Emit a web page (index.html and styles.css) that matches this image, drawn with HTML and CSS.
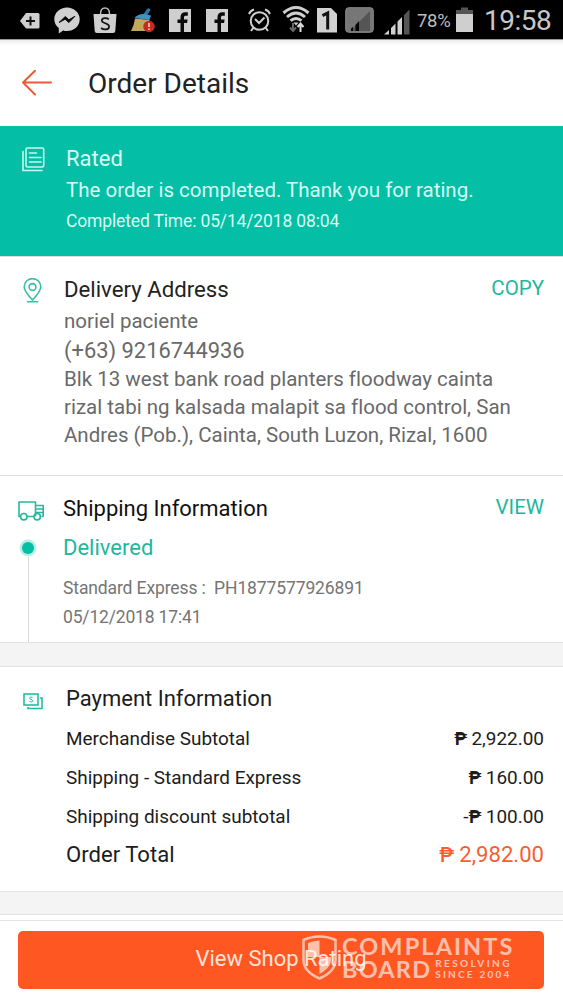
FILE: index.html
```
<!DOCTYPE html>
<html lang="en">
<head>
<meta charset="utf-8">
<title>Order Details</title>
<link rel="stylesheet" href="styles.css">
</head>
<body>
<div class="screen">
  <div class="status">
    <svg class="i-tag" width="20" height="18" viewBox="0 0 20 18"><path d="M6 1h12q1.500 0 1.500 1.500v12.500q0 1.500-1.500 1.500H6L0 9z" fill="#cfcfcf"/><path d="M10.500 4.500v9M6 9h9" stroke="#111" stroke-width="2"/></svg>
    <svg class="i-msg" width="26" height="27" viewBox="0 0 26 27"><path d="M13 .5C6 .5.300 5.600.300 12.300c0 3.700 1.700 6.500 4.500 8.600V26.500l4.300-2.900c1.200.400 2.500.500 3.900.500 7 0 12.700-5.100 12.700-11.800S20 .5 13 .5z" fill="#d0d0d0"/><path d="M5 15.500l6.300-6 3.600 3.300 6-3.500-6 6.300-3.700-3.400z" fill="#0a0a0a" stroke="#0a0a0a"/></svg>
    <svg class="i-bag" width="24" height="27" viewBox="0 0 24 27"><path d="M7.500 7C7.500 3 9.300 1 12 1s4.500 2 4.500 6" fill="none" stroke="#bbb" stroke-width="1.500"/><path d="M.5 7h23l-1.200 17q-.2 2-2.200 2H3.900q-2 0-2.200-2z" fill="#cfcfcf"/><path d="M15.800 12.300c-1.500-1.500-7-2-7 1.200 0 3.200 7.300 2.200 7.300 5.900 0 3.800-5.600 3.600-8 1.600" fill="none" stroke="#111" stroke-width="1.700"/></svg>
    <svg class="i-broom" width="25" height="26" viewBox="0 0 25 26"><path d="M14 7l3.500-5" stroke="#2b78a8" stroke-width="3.500" stroke-linecap="round"/><path d="M3.500 10Q9 3.500 20 7.500L18.500 12z" fill="#3c93c8"/><path d="M4 10.500L18.500 12 17 23H0q3-5 4-12.500z" fill="#c3a75a"/><circle cx="18" cy="18.500" r="5.700" fill="#c62a20"/><path d="M18 15v4M18 20.500v1.500" stroke="#f0d8d0" stroke-width="1.600"/></svg>
    <svg class="i-fb" width="22" height="23" viewBox="0 0 22 23"><path d="M0 0h22v23H0z" fill="#cfcfcf"/><path d="M11.500 23v-9H8.500v-3.500h3V8c0-3.300 2-4.800 4.800-4.800h2.500v3.500h-1.900c-1.400 0-1.900.600-1.900 1.800v2h3.600l-.5 3.500h-3.100v9z" fill="#0a0a0a"/></svg>
    <svg class="i-fb2" width="22" height="23" viewBox="0 0 22 23"><path d="M0 0h22v23H0z" fill="#cfcfcf"/><path d="M11.500 23v-9H8.500v-3.500h3V8c0-3.300 2-4.800 4.800-4.800h2.500v3.500h-1.900c-1.400 0-1.900.600-1.900 1.800v2h3.600l-.5 3.500h-3.100v9z" fill="#0a0a0a"/></svg>
    <svg class="i-alarm" width="23" height="24" viewBox="0 0 23 24" fill="none" stroke="#cfcfcf" stroke-width="2"><circle cx="11.500" cy="13" r="8.800"/><path d="M7 11l4 4 5.500-5.500M1 6q1.500-3.500 5-4.500M22 6q-1.500-3.500-5-4.500M5.500 19.500L3 23M17.500 19.500L20 23"/></svg>
    <svg class="i-wifi" width="28" height="28" viewBox="0 0 28 28" fill="none"><path d="M1.500 8Q14-3 26.500 8M5 12q9-8 18 0M8.500 15.700q5.500-4.500 11 0" stroke="#cfcfcf" stroke-width="3"/><path d="M11.500 17.500h5L14 20.500z" fill="#cfcfcf"/><path d="M11 18v8M8 22.500l3 3.500 3-3.500" stroke="#666" stroke-width="2"/><path d="M18.500 27v-8M15.500 22l3-3.500 3 3.500" stroke="#ddd" stroke-width="2"/></svg>
    <svg class="i-sim" width="20" height="26" viewBox="0 0 20 26"><path d="M0 1h14l6 6v18.500H0z" fill="#d2d2d2"/><path d="M5.500 8.700L10.700 6v16.500" fill="none" stroke="#111" stroke-width="3"/></svg>
    <svg class="i-box" width="29" height="26" viewBox="0 0 29 26"><rect x=".7" y=".7" width="27.600" height="24.600" rx="3" fill="#777" stroke="#8a8a8a"/><path d="M25 4v20H5z" fill="#555"/><path d="M6 24v-2.500l2-1.500v4zM10.500 24v-6l3.500-4v10z" fill="#050505"/></svg>
    <svg class="i-sig" width="26" height="26" viewBox="0 0 26 26"><path d="M0 25.500l5-4.500v4.500zM7 25.500V19l4.500-4.500v11zM13.500 25.500V12.500L18 8v17.500z" fill="#d0d0d0"/><path d="M20 25.500V6l5.500-5.500v25z" fill="#555"/></svg>
    <span class="pct">78%</span>
    <svg class="i-bat" width="17" height="26" viewBox="0 0 17 26"><path d="M0 3h5V.5h7V3h5v5H0z" fill="#555"/><path d="M0 7h17v18H0z" fill="#cfcfcf"/></svg>
    <span class="clock">19:58</span>
  </div>

  <header class="appbar">
    <svg width="30" height="26" viewBox="0 0 30 26" fill="none" stroke="#ee5a32" stroke-width="2" stroke-linecap="round" stroke-linejoin="round"><path d="M29 12.500H1M13 .8L1 12.500l12 12"/></svg>
    <h1 class="appbar-title">Order Details</h1>
  </header>

  <section class="rated">
    <svg class="icon-rated" width="23" height="25" viewBox="0 0 23 25" fill="none" stroke="#c9f8ed" stroke-width="1.600" stroke-linecap="round"><rect x="4" y="1" width="17.700" height="19" rx="1.500"/><path d="M1 4.500V23.500H20M7.500 6h7M7.500 10.500h11.500M7.500 15h11.500"/></svg>
    <div>
      <div class="rated-title">Rated</div>
      <div class="rated-msg">The order is completed. Thank you for rating.</div>
      <div class="rated-time">Completed Time: 05/14/2018 08:04</div>
    </div>
  </section>

  <section class="address">
    <svg class="icon-pin" width="19" height="25" viewBox="0 0 19 25" fill="none" stroke="#35bfa7" stroke-width="1.600" stroke-linecap="round"><path d="M9.500 22C5 17 1.200 13 1.200 8.900a8.300 8.300 0 0 1 16.600 0C17.800 13 14 17 9.500 22zM4.500 23.700h10"/><circle cx="9.500" cy="9" r="3.400"/></svg>
    <div class="grow">
      <div class="head"><span class="addr-title">Delivery Address</span><a class="link copy">COPY</a></div>
      <div class="addr-name">noriel paciente</div>
      <div class="addr-phone">(+63) 9216744936</div>
      <div class="addr-text">Blk 13 west bank road planters floodway cainta<br>rizal tabi ng kalsada malapit sa flood control, San<br>Andres (Pob.), Cainta, South Luzon, Rizal, 1600</div>
    </div>
  </section>

  <section class="shipping">
    <div class="rail">
      <svg class="icon-truck" width="26" height="20" viewBox="0 0 26 20" fill="none" stroke="#27b89f" stroke-width="1.600" stroke-linejoin="round"><path d="M2.500 15.500H1V1h16.500v14.500M9 15.500h7M17.500 4.500h7.700v11h-1.700M18 8h7M18 11.500h7"/><circle cx="5.800" cy="15.700" r="3.200"/><circle cx="19.200" cy="15.700" r="3.200"/></svg>
      <div class="dot"></div>
      <div class="track"></div>
    </div>
    <div class="grow">
      <div class="head"><span class="ship-title">Shipping Information</span><a class="link view">VIEW</a></div>
      <div class="ship-state">Delivered</div>
      <div class="ship-no">Standard Express :&nbsp; PH1877577926891</div>
      <div class="ship-date">05/12/2018 17:41</div>
    </div>
  </section>
  <div class="band band-a"></div>

  <section class="payment">
    <svg class="icon-pay" width="20" height="17" viewBox="0 0 20 17" fill="none" stroke="#27bba4" stroke-width="1.600"><rect x="1" y="1" width="14" height="11" /><path d="M17 5h2v10.500H5V14"/><path d="M9.700 4.500c-1-.7-3.200-.6-3.200.7 0 1.600 3.300.900 3.300 2.500 0 1.400-2.300 1.400-3.500.600" stroke-width="1"/></svg>
    <div class="grow">
      <div class="pay-title">Payment Information</div>
      <div class="row"><span>Merchandise Subtotal</span><span class="amt"><b>₱</b> 2,922.00</span></div>
      <div class="row"><span>Shipping - Standard Express</span><span class="amt"><b>₱</b> 160.00</span></div>
      <div class="row"><span>Shipping discount subtotal</span><span class="amt">-<b>₱</b> 100.00</span></div>
      <div class="row total"><span>Order Total</span><span class="amt orange"><b>₱</b> 2,982.00</span></div>
    </div>
  </section>
  <div class="band band-b"></div>

  <footer class="footer">
    <button class="cta">View Shop Rating</button>
    <div class="mark">
      <svg width="35" height="45" viewBox="0 0 35 45"><path d="M17.500 1.500Q26 1.500 33.500 5v20c0 9-8 15-16 18.500C9.500 40 1.500 34 1.500 25V5Q9 1.500 17.500 1.500z" fill="none" stroke="#fff" stroke-width="2.500"/><path d="M17.500 5.500Q11 5.500 6 8v14h11.500zM17.500 22H29v3c0 6-6 11-11.500 14z" fill="#fff"/></svg>
      <div class="mark-text">
        <div class="m1">COMPLAINTS</div>
        <div class="m-row"><div class="m2">BOARD</div><div class="m3"><div>RESOLVING</div><div class="m3b">SINCE 2004</div></div></div>
      </div>
    </div>
  </footer>
</div>
</body>
</html>
```
FILE: styles.css
```
* { box-sizing: border-box; }
body { margin: 0; font-family: Roboto, "Noto Sans", sans-serif; background: #fff; color: #222; }
.screen { width: 563px; height: 1000px; overflow: hidden; display: flex; flex-direction: column; white-space: nowrap; font-variant-ligatures: none; }
.grow { flex: 1; }
svg { display: block; flex: none; }

.status { height: 40px; flex: none; background: #000; border-bottom: 1px solid #999; display: flex; align-items: flex-start; padding-left: 20px; }
.i-tag { margin-top: 12px; }
.i-msg { margin: 7px 0 0 14px; }
.i-bag { margin: 7px 0 0 13px; }
.i-broom { margin: 8px 0 0 14px; }
.i-fb { margin: 9px 0 0 13px; }
.i-fb2 { margin: 9px 0 0 15px; }
.i-alarm { margin: 8px 0 0 20px; }
.i-wifi { margin: 5px 0 0 11px; }
.i-sim { margin: 7px 0 0 7px; }
.i-box { margin: 7px 0 0 8px; }
.i-sig { margin: 9px 0 0 10px; }
.pct { margin-left: 7px; width: 39px; font-size: 18.500px; line-height: 42px; color: #bdbdbd; letter-spacing: -.3px; }
.i-bat { margin-top: 7px; }
.clock { margin-left: 11px; font-size: 28px; line-height: 41px; color: #c8c8c8; letter-spacing: -.5px; }

.appbar { height: 86px; flex: none; display: flex; align-items: center; padding-left: 22px; gap: 36px; background: linear-gradient(#ececec, #fff 5px); }
.appbar-title { margin: 0; font-size: 28px; font-weight: 400; line-height: 84px; padding-top: 2px; }

.rated { height: 130px; flex: none; background: #04bfa5; color: #d9fbf3; display: flex; padding: 18px 0 0 22px; }
.icon-rated { margin: 3px 21px 0 0; }
.rated-title { font-size: 22px; line-height: 29px; }
.rated-msg { font-size: 20.500px; line-height: 34px; }
.rated-time { font-size: 17.500px; line-height: 28px; letter-spacing: -.15px; }

.head { display: flex; justify-content: space-between; }
.link { color: #1fb79d; font-size: 20.500px; }
.address { height: 220px; flex: none; display: flex; padding: 17px 19px 0 23px; border-top: 1px solid #ddd; border-bottom: 1px solid #dedede; color: #696969; }
.icon-pin { margin: 4px 22px 0 0; }
.addr-title { font-size: 22.200px; line-height: 31px; color: #222; }
.copy { line-height: 28px; }
.addr-name { font-size: 20.500px; line-height: 32px; }
.addr-phone { font-size: 21.900px; line-height: 27px; margin-bottom: 1px; }
.addr-text { font-size: 20.500px; line-height: 28px; }

.shipping { height: 166px; flex: none; display: flex; padding: 16px 19px 0 18px; color: #757575; }
.rail { width: 45px; display: flex; flex-direction: column; align-items: flex-start; }
.icon-truck { margin-top: 9px; }
.dot { width: 12px; height: 12px; margin: 21px 0 0 4px; border-radius: 50%; background: #04bfa5; box-shadow: 0 0 0 2.500px #b5efe4; flex: none; }
.track { flex: 1; width: 1px; margin: 3px 0 0 10px; background: #d9d9d9; }
.ship-title { font-size: 22px; line-height: 34px; color: #111; }
.view { line-height: 30px; }
.ship-state { font-size: 22px; line-height: 44px; color: #1fb79d; }
.ship-no { font-size: 17.500px; line-height: 36px; letter-spacing: -.12px; }
.ship-date { font-size: 17.500px; line-height: 23px; letter-spacing: -.17px; }

.band { flex: none; height: 25px; background: #f4f4f4; border-top: 1px solid #e2e2e2; border-bottom: 1px solid #e2e2e2; }
.band-b { height: 24px; }

.payment { height: 224px; flex: none; display: flex; padding: 16px 19px 0 23px; color: #1c1c1c; }
.icon-pay { margin: 10px 23px 0 0; }
.pay-title { font-size: 22px; line-height: 32px; margin-bottom: 4px; }
.row { display: flex; justify-content: space-between; height: 39px; font-size: 18.950px; line-height: 39px; }
.amt b { font-weight: 700; font-size: .92em; line-height: 1; letter-spacing: -.5px; }
.total { font-size: 22.100px; line-height: 37px; }
.total b { font-weight: 500; }
.orange { color: #f75f31; }

.footer { position: relative; flex: none; height: 85px; padding: 10px 18px 0; margin-top: 5px; border-top: 1px solid #e4e4e4; border-bottom: 1px solid #ddd; }
.cta { display: block; width: 526px; height: 58px; border: 0; border-radius: 5px; background: #ff5722; color: #ffe3d8; font-family: inherit; font-size: 22px; text-align: center; padding: 0 0 2px; line-height: 54px; }
.mark { position: absolute; left: 302px; top: 14px; display: flex; opacity: .62; color: #fff; font-family: Lato, sans-serif; font-weight: 700; }
.mark-text { margin-left: 5px; }
.m1 { font-size: 23.500px; line-height: 23px; letter-spacing: 2.100px; }
.m2 { font-size: 23.500px; line-height: 22px; letter-spacing: 1.200px; }
.m-row { display: flex; }
.m3 { font-size: 10px; line-height: 11px; margin-left: 4px; letter-spacing: 2.400px; }
.m3b { letter-spacing: 2.200px; }
```
